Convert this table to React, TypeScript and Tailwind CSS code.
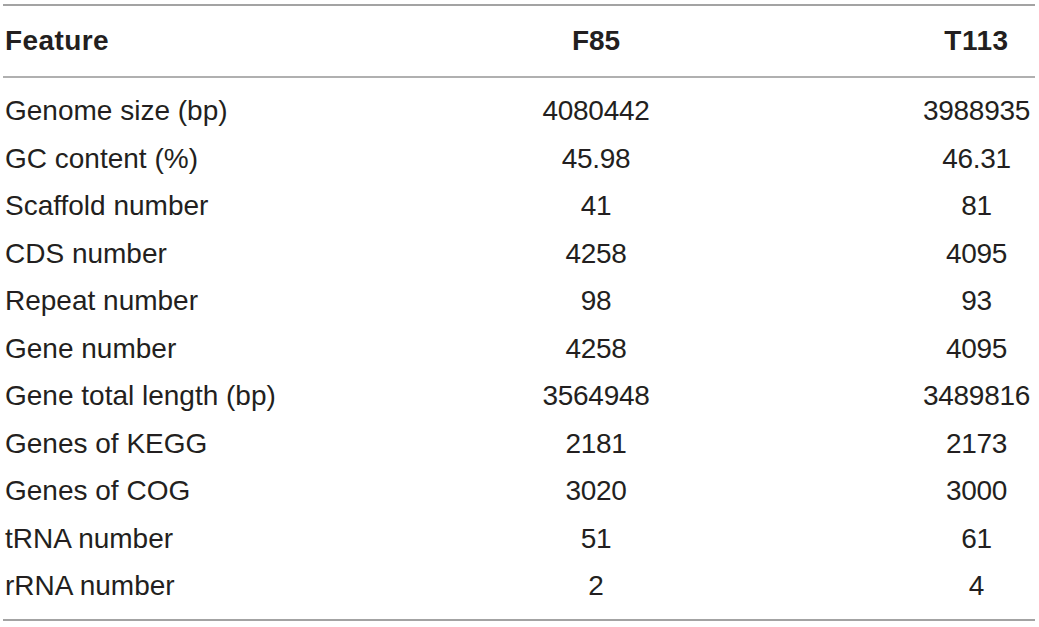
const rows: [string, string, string][] = [
  ["Genome size (bp)", "4080442", "3988935"],
  ["GC content (%)", "45.98", "46.31"],
  ["Scaffold number", "41", "81"],
  ["CDS number", "4258", "4095"],
  ["Repeat number", "98", "93"],
  ["Gene number", "4258", "4095"],
  ["Gene total length (bp)", "3564948", "3489816"],
  ["Genes of KEGG", "2181", "2173"],
  ["Genes of COG", "3020", "3000"],
  ["tRNA number", "51", "61"],
  ["rRNA number", "2", "4"],
];

export default function App() {
  return (
    <div className="w-[1039px] h-[627px] bg-white overflow-hidden pt-[4px] pl-[3px]" style={{ fontFamily: '"Liberation Sans", Arial, sans-serif' }}>
      <div className="w-[1032px] border-t-2 border-b-2 border-[#a3a3a3] text-[#231f20]">
        <div className="grid grid-cols-[493px_200px_1fr] items-center h-[72px] border-b-2 border-[#b0b0b0] text-[28px] font-bold">
          <div className="pl-[2px] tracking-[0.4px]">Feature</div>
          <div className="text-center">F85</div>
          <div className="text-center pl-[222px] tracking-[0.5px]">T113</div>
        </div>
        <div className="py-[9px]">
          {rows.map(([name, a, b]) => (
            <div key={name} className="grid grid-cols-[493px_200px_1fr] text-[28px] leading-[47.5px]">
              <div className="pl-[2px]">{name}</div>
              <div className="text-center tracking-[-0.3px]">{a}</div>
              <div className="text-center pl-[222px] tracking-[-0.3px]">{b}</div>
            </div>
          ))}
        </div>
      </div>
    </div>
  );
}
